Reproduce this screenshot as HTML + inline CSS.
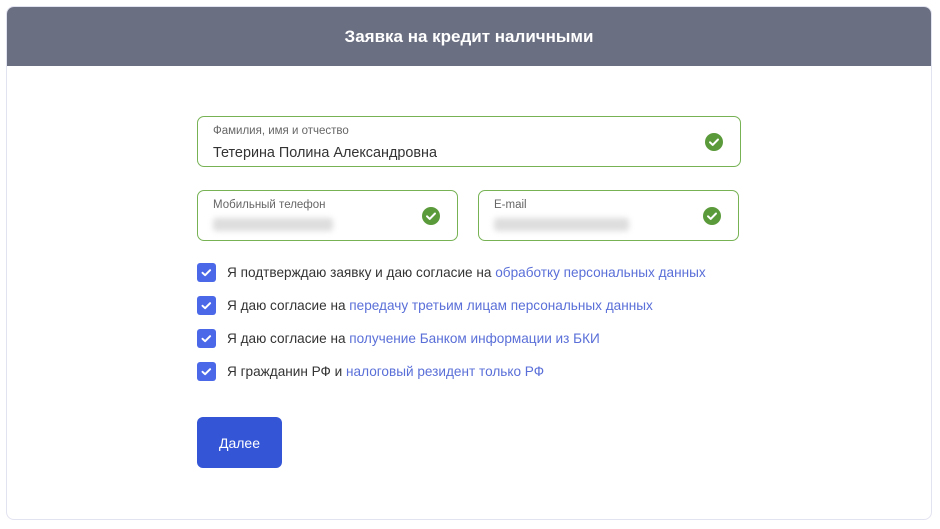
<!DOCTYPE html>
<html><head><meta charset="utf-8"><style>
*{box-sizing:border-box;margin:0;padding:0}
body{width:940px;height:529px;background:#fff;font-family:"Liberation Sans",sans-serif;position:relative;overflow:hidden}
.card{position:absolute;left:6px;top:6px;width:926px;height:514px;border:1px solid #e2e3f0;border-radius:8px;overflow:hidden}
.hd{height:59px;background:#6b6f82;color:#fff;font-weight:bold;font-size:17px;text-align:center;line-height:60px}
.f{position:absolute;border:1px solid #77b255;border-radius:7px;height:51px}
.lb{position:absolute;left:15px;top:8px;font-size:11.5px;color:#666}
.v{position:absolute;left:15px;top:28px;font-size:14.4px;color:#333}
.blur{position:absolute;left:15px;top:27px;height:13px;background:#ddd;filter:blur(3px);border-radius:3px}
.ok{position:absolute;right:17px;top:16px;width:18px;height:18px;border-radius:50%;background:#5a9a3a}
.ok svg{position:absolute;left:0;top:0}
.cb{position:absolute;left:197px;width:19px;height:19px;border-radius:3px;background:#4a68e8}
.t{position:absolute;left:227px;font-size:13.6px;color:#333}
.t a{color:#5a6fd8;text-decoration:none}
.btn{position:absolute;left:197px;top:417px;width:85px;height:51px;border-radius:6px;background:#3355d6;color:#fff;font-size:14px;text-align:center;line-height:52px}
</style></head><body>
<div class="card"><div class="hd">Заявка на кредит наличными</div></div>
<div class="f" style="left:197px;top:116px;width:544px"><div class="lb">Фамилия, имя и отчество</div><div class="v">Тетерина Полина Александровна</div><div class="ok"><svg width="18" height="18"><path d="M5 9.3l2.7 2.6L13 6.5" stroke="#fff" stroke-width="2" fill="none" stroke-linecap="round" stroke-linejoin="round"/></svg></div></div>
<div class="f" style="left:197px;top:190px;width:261px"><div class="lb">Мобильный телефон</div><div class="blur" style="width:120px"></div><div class="ok"><svg width="18" height="18"><path d="M5 9.3l2.7 2.6L13 6.5" stroke="#fff" stroke-width="2" fill="none" stroke-linecap="round" stroke-linejoin="round"/></svg></div></div>
<div class="f" style="left:478px;top:190px;width:261px"><div class="lb">E-mail</div><div class="blur" style="width:135px"></div><div class="ok"><svg width="18" height="18"><path d="M5 9.3l2.7 2.6L13 6.5" stroke="#fff" stroke-width="2" fill="none" stroke-linecap="round" stroke-linejoin="round"/></svg></div></div>
<div class="cb" style="top:263px"><svg width="19" height="19"><path d="M5.5 9.8l2.6 2.4 5-5" stroke="#fff" stroke-width="2" fill="none" stroke-linecap="round" stroke-linejoin="round"/></svg></div>
<div class="t" style="top:265px">Я подтверждаю заявку и даю согласие на <a>обработку персональных данных</a></div>
<div class="cb" style="top:296px"><svg width="19" height="19"><path d="M5.5 9.8l2.6 2.4 5-5" stroke="#fff" stroke-width="2" fill="none" stroke-linecap="round" stroke-linejoin="round"/></svg></div>
<div class="t" style="top:298px">Я даю согласие на <a>передачу третьим лицам персональных данных</a></div>
<div class="cb" style="top:329px"><svg width="19" height="19"><path d="M5.5 9.8l2.6 2.4 5-5" stroke="#fff" stroke-width="2" fill="none" stroke-linecap="round" stroke-linejoin="round"/></svg></div>
<div class="t" style="top:331px">Я даю согласие на <a>получение Банком информации из БКИ</a></div>
<div class="cb" style="top:362px"><svg width="19" height="19"><path d="M5.5 9.8l2.6 2.4 5-5" stroke="#fff" stroke-width="2" fill="none" stroke-linecap="round" stroke-linejoin="round"/></svg></div>
<div class="t" style="top:364px">Я гражданин РФ и <a>налоговый резидент только РФ</a></div>
<div class="btn">Далее</div>
</body></html>
